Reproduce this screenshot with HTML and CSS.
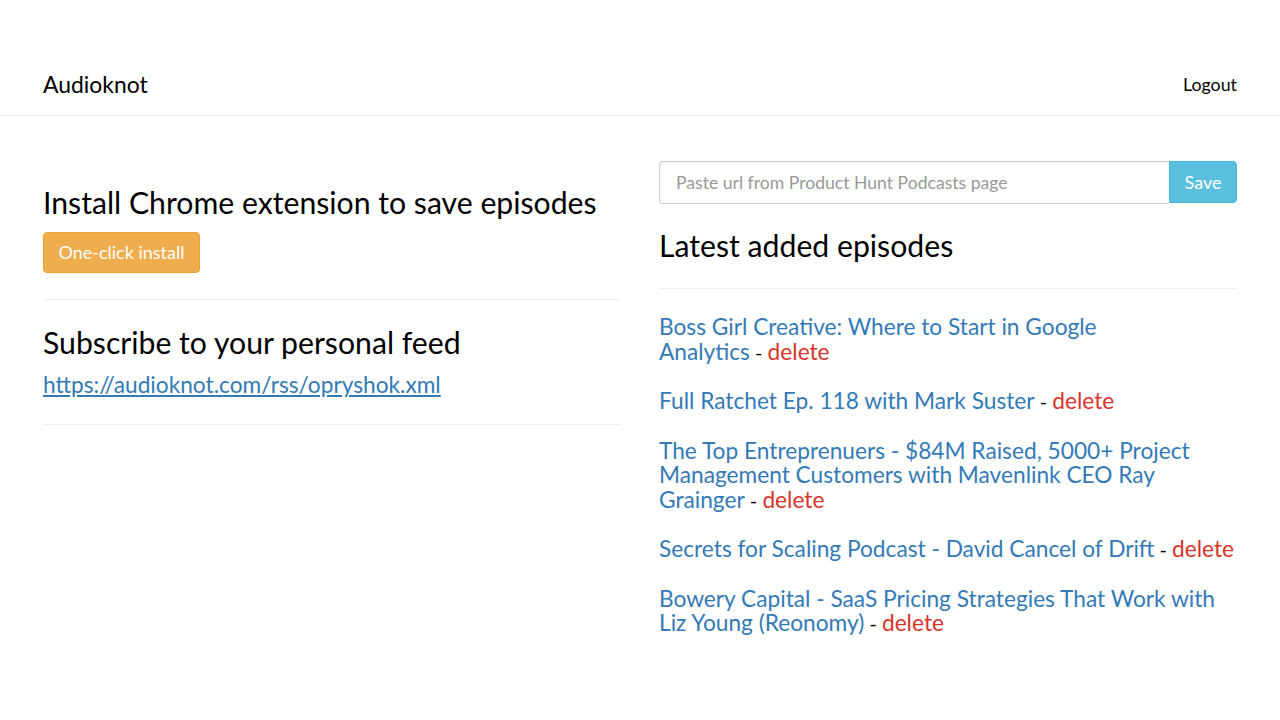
FILE: index.html
```html
<!DOCTYPE html>
<html lang="en">
<head>
<meta charset="utf-8">
<title>Audioknot</title>
<link rel="stylesheet" href="styles.css">
</head>
<body>
<header class="navbar">
  <a class="brand" href="#">Audioknot</a>
  <a class="nav-link" href="#">Logout</a>
</header>
<main class="content">
  <section class="col col-left">
    <h2 class="heading first">Install Chrome extension to save episodes</h2>
    <button class="btn btn-warning" type="button">One-click install</button>
    <hr class="rule">
    <h2 class="heading">Subscribe to your personal feed</h2>
    <p class="feed"><a href="#">https://audioknot.com/rss/opryshok.xml</a></p>
    <hr class="rule">
  </section>
  <section class="col col-right">
    <form class="input-group">
      <input class="form-control" type="text" placeholder="Paste url from Product Hunt Podcasts page">
      <button class="btn btn-info" type="button">Save</button>
    </form>
    <h2 class="heading latest">Latest added episodes</h2>
    <hr class="rule">
    <div class="episodes">
      <p class="episode"><a href="#">Boss Girl Creative: Where to Start in Google Analytics</a><span class="tail">&nbsp;- <a class="delete" href="#">delete</a></span></p>
      <p class="episode"><a href="#">Full Ratchet Ep. 118 with Mark Suster</a><span class="tail">&nbsp;- <a class="delete" href="#">delete</a></span></p>
      <p class="episode"><a href="#">The Top Entreprenuers - $84M Raised, 5000+ Project Management Customers with Mavenlink CEO Ray Grainger</a><span class="tail">&nbsp;- <a class="delete" href="#">delete</a></span></p>
      <p class="episode"><a href="#">Secrets for Scaling Podcast - David Cancel of Drift</a><span class="tail">&nbsp;- <a class="delete" href="#">delete</a></span></p>
      <p class="episode"><a href="#">Bowery Capital - SaaS Pricing Strategies That Work with Liz Young (Reonomy)</a><span class="tail">&nbsp;- <a class="delete" href="#">delete</a></span></p>
    </div>
  </section>
</main>
</body>
</html>
```

FILE: styles.css
```css
* { box-sizing: border-box; }

html, body {
  margin: 0;
  padding: 0;
  background: #fff;
}

body {
  font-family: Lato, "Open Sans", sans-serif;
  color: #000;
  font-size: 22.7px;
  line-height: 24.5px;
}

a { color: #337ab7; text-decoration: none; }

.navbar {
  margin-top: 52px;
  height: 64px;
  border-bottom: 1px solid #eeeeee;
  display: flex;
  align-items: center;
  justify-content: space-between;
  padding: 0 43px 0 43px;
}

.brand {
  color: #000;
  font-size: 22.9px;
  line-height: 30px;
  padding-top: 1px;
}

.nav-link {
  color: #000;
  font-size: 17.8px;
  line-height: 24px;
}

.content {
  display: grid;
  grid-template-columns: 1fr 1fr;
  column-gap: 38px;
  padding: 45px 43px 0 43px;
}

.col { min-width: 0; }

.heading {
  font-size: 30.2px;
  font-weight: 400;
  line-height: 33px;
  margin: 0;
}

.heading.first { margin-top: 25px; }

.btn {
  font-family: Lato, "Open Sans", sans-serif;
  font-size: 18px;
  line-height: 24px;
  color: #fff;
  border: 1px solid transparent;
  cursor: pointer;
}

.btn-warning {
  display: block;
  margin-top: 13px;
  height: 41px;
  width: 157px;
  padding: 7px 0 8px 0;
  background: #f0ad4e;
  border-color: #eea236;
  border-radius: 4px;
}

.rule {
  border: 0;
  border-top: 1px solid #eeeeee;
  margin: 26px 0 26px 0;
  height: 0;
}

.feed {
  margin: 14px 0 0 0;
  line-height: 24.5px;
}

.feed a { text-decoration: underline; }

.input-group {
  display: flex;
  margin: 0;
  height: 43px;
}

.form-control {
  flex: 1;
  min-width: 0;
  height: 43px;
  border: 1px solid #cccccc;
  border-right: 0;
  border-radius: 4px 0 0 4px;
  padding: 0 16px;
  font-family: Lato, "Open Sans", sans-serif;
  font-size: 17.6px;
  color: #555;
  box-shadow: inset 0 1px 1px rgba(0,0,0,0.075);
}

.form-control::placeholder { color: #999999; }

.btn-info {
  height: 42px;
  width: 68px;
  padding: 0;
  background: #5bc0de;
  border-color: #46b8da;
  border-radius: 0 4px 4px 0;
}

.heading.latest { margin-top: 25px; }

.episodes { margin-top: 0; }

.episode {
  margin: 0 0 25px 0;
}

.tail { white-space: nowrap; color: #000; font-size: 20px; }

.delete { color: #d9342b; font-size: 22.7px; }
```
